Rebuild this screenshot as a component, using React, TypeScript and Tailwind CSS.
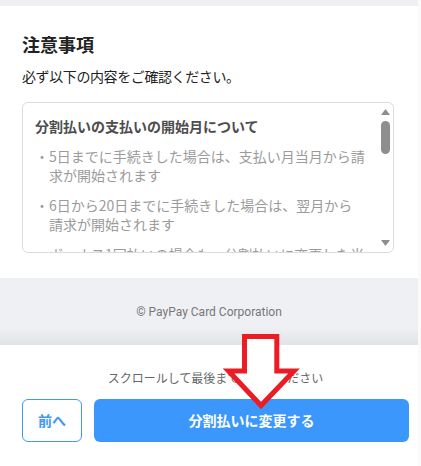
import React from "react";

const jp = { fontFamily: '"Noto Sans CJK JP", "Noto Sans", sans-serif' };

export default function App() {
  return (
    <div className="relative w-[421px] h-[466px] overflow-hidden flex bg-white" style={jp}>
      <div className="w-[418px] flex flex-col">
        <div className="h-[6px] bg-[#eff0f4]" />
        <section className="bg-white px-[22px] pt-[25px] pb-[25px]">
          <h2 className="text-[18px] leading-[26px] font-bold text-[#222]">注意事項</h2>
          <p className="mt-[9px] text-[14px] leading-[20px] text-[#222] tracking-[-0.4px]">
            必ず以下の内容をご確認ください。
          </p>
          <div className="mt-[16px] h-[151px] w-[372px] rounded-[6px] border border-[#dcdcdc] flex overflow-hidden">
            <div className="flex-1 overflow-hidden pl-[12px] pt-[13px]">
              <h3 className="text-[14px] leading-[20px] font-bold text-[#4d4d4d] whitespace-nowrap">
                分割払いの支払いの開始月について
              </h3>
              <ul className="mt-[11px] text-[14px] leading-[19px] text-[#9b9b9b] whitespace-nowrap">
                <li className="flex">
                  <span className="w-[14px] shrink-0 text-center">・</span>
                  <span>
                    5日までに手続きした場合は、支払い月当月から請
                    <br />
                    求が開始されます
                  </span>
                </li>
                <li className="flex mt-[11px]">
                  <span className="w-[14px] shrink-0 text-center">・</span>
                  <span>
                    6日から20日までに手続きした場合は、翌月から
                    <br />
                    請求が開始されます
                  </span>
                </li>
                <li className="flex mt-[11px]">
                  <span className="w-[14px] shrink-0 text-center">・</span>
                  <span>ボーナス1回払いの場合も、分割払いに変更した当</span>
                </li>
              </ul>
            </div>
            <div className="w-[15px] flex flex-col items-center pt-[6px] pb-[6px]">
              <svg width="9" height="6" viewBox="0 0 9 6">
                <polygon points="4.5,0 9,6 0,6" fill="#8e8e8e" />
              </svg>
              <div className="mt-[6px] w-[9px] h-[33px] rounded-full bg-[#8e8e8e]" />
              <div className="flex-1" />
              <svg width="9" height="6" viewBox="0 0 9 6">
                <polygon points="0,0 9,0 4.5,6" fill="#8e8e8e" />
              </svg>
            </div>
          </div>
        </section>
        <footer className="h-[67px] flex items-center justify-center bg-[linear-gradient(to_bottom,#eff0f4_0%,#eff0f4_74%,#e2e3e7_100%)]">
          <span
            className="text-[12px] leading-[16px] text-[#777]"
            style={{ fontFamily: 'Roboto, "Noto Sans", sans-serif' }}
          >
            © PayPay Card Corporation
          </span>
        </footer>
        <div className="flex-1 bg-white pl-[22px] pr-[9px] pt-[25px]">
          <p className="text-center text-[12px] leading-[16px] text-[#666]">
            スクロールして最後までご確認ください
          </p>
          <div className="mt-[13px] flex gap-[12px]">
            <button className="w-[60px] h-[43px] rounded-[6px] border border-[#3f98f7] text-[#3f98f7] text-[14px] font-bold bg-white">
              前へ
            </button>
            <button className="flex-1 h-[43px] rounded-[6px] bg-[#3c97fc] text-white text-[14px] font-bold">
              分割払いに変更する
            </button>
          </div>
        </div>
      </div>
      <div className="w-[3px] bg-[#fafafa]" />
      <svg
        className="absolute left-0 top-0 pointer-events-none"
        width="421"
        height="466"
        viewBox="0 0 421 466"
      >
        <polygon
          points="244.5,336.5 276.8,336.5 276.8,371 294,371 261,405.5 228.5,371 244.5,371"
          fill="#ffffff"
          stroke="#ec1c24"
          strokeWidth="5"
          strokeLinejoin="miter"
        />
      </svg>
    </div>
  );
}
